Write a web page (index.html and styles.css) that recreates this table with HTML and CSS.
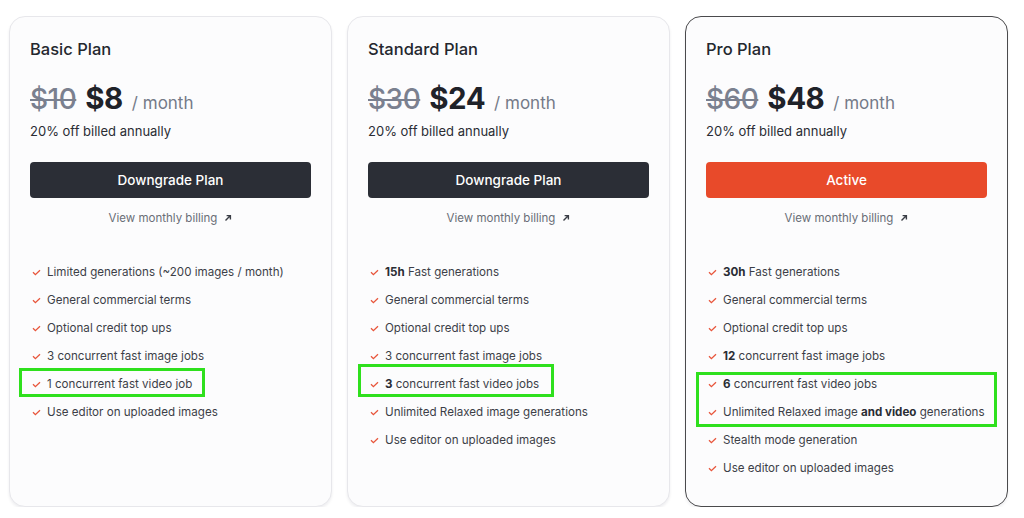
FILE: index.html
```html
<!DOCTYPE html>
<html lang="en">
<head>
<meta charset="utf-8">
<title>Plans</title>
<link rel="stylesheet" href="styles.css">
</head>
<body>
<div class="plans">
  <section class="card">
    <h2 class="name">Basic Plan</h2>
    <div class="price"><s class="old">$10</s><span class="now">$8</span><span class="per">/ month</span></div>
    <p class="note">20% off billed annually</p>
    <button class="btn btn-dark">Downgrade Plan</button>
    <a class="billing">View monthly billing <svg class="arrow" viewBox="0 0 8 8" width="8" height="8"><path d="M1.5 6.5 L6.2 1.8 M2.6 1.6 H6.4 V5.4" fill="none" stroke="currentColor" stroke-width="1.4"/></svg></a>
    <ul class="features">
      <li><svg class="chk" viewBox="0 0 9 7" width="9" height="7"><path d="M1 3.2 L3.4 5.6 L8 1.2" fill="none" stroke="currentColor" stroke-width="1.3"/></svg>Limited generations (~200 images / month)</li>
      <li><svg class="chk" viewBox="0 0 9 7" width="9" height="7"><path d="M1 3.2 L3.4 5.6 L8 1.2" fill="none" stroke="currentColor" stroke-width="1.3"/></svg>General commercial terms</li>
      <li><svg class="chk" viewBox="0 0 9 7" width="9" height="7"><path d="M1 3.2 L3.4 5.6 L8 1.2" fill="none" stroke="currentColor" stroke-width="1.3"/></svg>Optional credit top ups</li>
      <li><svg class="chk" viewBox="0 0 9 7" width="9" height="7"><path d="M1 3.2 L3.4 5.6 L8 1.2" fill="none" stroke="currentColor" stroke-width="1.3"/></svg>3 concurrent fast image jobs</li>
      <li><svg class="chk" viewBox="0 0 9 7" width="9" height="7"><path d="M1 3.2 L3.4 5.6 L8 1.2" fill="none" stroke="currentColor" stroke-width="1.3"/></svg>1 concurrent fast video job</li>
      <li><svg class="chk" viewBox="0 0 9 7" width="9" height="7"><path d="M1 3.2 L3.4 5.6 L8 1.2" fill="none" stroke="currentColor" stroke-width="1.3"/></svg>Use editor on uploaded images</li>
    </ul>
    <div class="hl hl-1"></div>
  </section>

  <section class="card">
    <h2 class="name">Standard Plan</h2>
    <div class="price"><s class="old">$30</s><span class="now">$24</span><span class="per">/ month</span></div>
    <p class="note">20% off billed annually</p>
    <button class="btn btn-dark">Downgrade Plan</button>
    <a class="billing">View monthly billing <svg class="arrow" viewBox="0 0 8 8" width="8" height="8"><path d="M1.5 6.5 L6.2 1.8 M2.6 1.6 H6.4 V5.4" fill="none" stroke="currentColor" stroke-width="1.4"/></svg></a>
    <ul class="features">
      <li><svg class="chk" viewBox="0 0 9 7" width="9" height="7"><path d="M1 3.2 L3.4 5.6 L8 1.2" fill="none" stroke="currentColor" stroke-width="1.3"/></svg><span><b>15h</b> Fast generations</span></li>
      <li><svg class="chk" viewBox="0 0 9 7" width="9" height="7"><path d="M1 3.2 L3.4 5.6 L8 1.2" fill="none" stroke="currentColor" stroke-width="1.3"/></svg>General commercial terms</li>
      <li><svg class="chk" viewBox="0 0 9 7" width="9" height="7"><path d="M1 3.2 L3.4 5.6 L8 1.2" fill="none" stroke="currentColor" stroke-width="1.3"/></svg>Optional credit top ups</li>
      <li><svg class="chk" viewBox="0 0 9 7" width="9" height="7"><path d="M1 3.2 L3.4 5.6 L8 1.2" fill="none" stroke="currentColor" stroke-width="1.3"/></svg>3 concurrent fast image jobs</li>
      <li><svg class="chk" viewBox="0 0 9 7" width="9" height="7"><path d="M1 3.2 L3.4 5.6 L8 1.2" fill="none" stroke="currentColor" stroke-width="1.3"/></svg><span><b>3</b> concurrent fast video jobs</span></li>
      <li><svg class="chk" viewBox="0 0 9 7" width="9" height="7"><path d="M1 3.2 L3.4 5.6 L8 1.2" fill="none" stroke="currentColor" stroke-width="1.3"/></svg>Unlimited Relaxed image generations</li>
      <li><svg class="chk" viewBox="0 0 9 7" width="9" height="7"><path d="M1 3.2 L3.4 5.6 L8 1.2" fill="none" stroke="currentColor" stroke-width="1.3"/></svg>Use editor on uploaded images</li>
    </ul>
    <div class="hl hl-2"></div>
  </section>

  <section class="card card-active">
    <h2 class="name">Pro Plan</h2>
    <div class="price"><s class="old">$60</s><span class="now">$48</span><span class="per">/ month</span></div>
    <p class="note">20% off billed annually</p>
    <button class="btn btn-accent">Active</button>
    <a class="billing">View monthly billing <svg class="arrow" viewBox="0 0 8 8" width="8" height="8"><path d="M1.5 6.5 L6.2 1.8 M2.6 1.6 H6.4 V5.4" fill="none" stroke="currentColor" stroke-width="1.4"/></svg></a>
    <ul class="features">
      <li><svg class="chk" viewBox="0 0 9 7" width="9" height="7"><path d="M1 3.2 L3.4 5.6 L8 1.2" fill="none" stroke="currentColor" stroke-width="1.3"/></svg><span><b>30h</b> Fast generations</span></li>
      <li><svg class="chk" viewBox="0 0 9 7" width="9" height="7"><path d="M1 3.2 L3.4 5.6 L8 1.2" fill="none" stroke="currentColor" stroke-width="1.3"/></svg>General commercial terms</li>
      <li><svg class="chk" viewBox="0 0 9 7" width="9" height="7"><path d="M1 3.2 L3.4 5.6 L8 1.2" fill="none" stroke="currentColor" stroke-width="1.3"/></svg>Optional credit top ups</li>
      <li><svg class="chk" viewBox="0 0 9 7" width="9" height="7"><path d="M1 3.2 L3.4 5.6 L8 1.2" fill="none" stroke="currentColor" stroke-width="1.3"/></svg><span><b>12</b> concurrent fast image jobs</span></li>
      <li><svg class="chk" viewBox="0 0 9 7" width="9" height="7"><path d="M1 3.2 L3.4 5.6 L8 1.2" fill="none" stroke="currentColor" stroke-width="1.3"/></svg><span><b>6</b> concurrent fast video jobs</span></li>
      <li><svg class="chk" viewBox="0 0 9 7" width="9" height="7"><path d="M1 3.2 L3.4 5.6 L8 1.2" fill="none" stroke="currentColor" stroke-width="1.3"/></svg><span>Unlimited Relaxed image <b>and video</b> generations</span></li>
      <li><svg class="chk" viewBox="0 0 9 7" width="9" height="7"><path d="M1 3.2 L3.4 5.6 L8 1.2" fill="none" stroke="currentColor" stroke-width="1.3"/></svg>Stealth mode generation</li>
      <li><svg class="chk" viewBox="0 0 9 7" width="9" height="7"><path d="M1 3.2 L3.4 5.6 L8 1.2" fill="none" stroke="currentColor" stroke-width="1.3"/></svg>Use editor on uploaded images</li>
    </ul>
    <div class="hl hl-3"></div>
  </section>
</div>
</body>
</html>
```

FILE: styles.css
```css
* { box-sizing: border-box; }

html, body {
  margin: 0;
  background: #ffffff;
}

body {
  font-family: "Inter", "Noto Sans", "Liberation Sans", sans-serif;
  color: #24272e;
  padding: 16px 15px 0 9px;
}

.plans {
  display: grid;
  grid-template-columns: repeat(3, 323px);
  column-gap: 15px;
}

.card {
  position: relative;
  height: 491px;
  background: #fcfcfd;
  border: 1px solid #e7e7eb;
  border-radius: 16px;
  box-shadow: 0 2px 3px rgba(20, 20, 40, 0.07);
  padding: 22px 20px 0 20px;
  display: flex;
  flex-direction: column;
}

.card-active {
  border-color: #4a4a4c;
}

.name {
  margin: 0;
  font-size: 16.5px;
  font-weight: 500;
  line-height: 20px;
  color: #24272e;
}

.price {
  margin-top: 22px;
  display: flex;
  align-items: baseline;
  height: 34px;
  line-height: 34px;
}

.old {
  font-size: 28px;
  font-weight: 500;
  color: #7a808f;
  letter-spacing: -0.5px;
  text-decoration-thickness: 2px;
}

.now {
  margin-left: 9px;
  font-size: 29.5px;
  font-weight: 700;
  color: #1f2229;
  letter-spacing: -0.5px;
}

.per {
  margin-left: 9px;
  font-size: 17px;
  color: #747a88;
}

.note {
  margin: 7px 0 0;
  font-size: 13px;
  line-height: 18px;
  color: #2a2d34;
}

.btn {
  margin-top: 22px;
  height: 36px;
  width: 100%;
  border: 0;
  border-radius: 4px;
  font-family: inherit;
  font-size: 13.5px;
  font-weight: 500;
  color: #ffffff;
}

.btn-dark { background: #2b2e36; }
.btn-accent { background: #e84a2a; }

.billing {
  margin-top: 12px;
  align-self: center;
  display: flex;
  align-items: center;
  gap: 7px;
  font-size: 11.5px;
  line-height: 16px;
  color: #6a6e77;
}

.arrow { color: #3a3d45; }

.features {
  list-style: none;
  margin: 32px 0 0;
  padding: 0;
}

.features li {
  display: flex;
  align-items: center;
  height: 28px;
  font-size: 11.6px;
  color: #3c3f48;
  padding-left: 2px;
  white-space: nowrap;
}

.features b {
  font-weight: 700;
  color: #2a2d34;
}

.chk {
  flex: none;
  color: #e8553b;
  margin-right: 6px;
}

.hl {
  position: absolute;
  border: 3px solid #2fe01d;
  pointer-events: none;
}

.hl-1 { left: 9px; top: 351px; width: 186px; height: 29px; }
.hl-2 { left: 10px; top: 347px; width: 196px; height: 33px; }
.hl-3 { left: 10px; top: 355px; width: 301px; height: 55px; }
```
